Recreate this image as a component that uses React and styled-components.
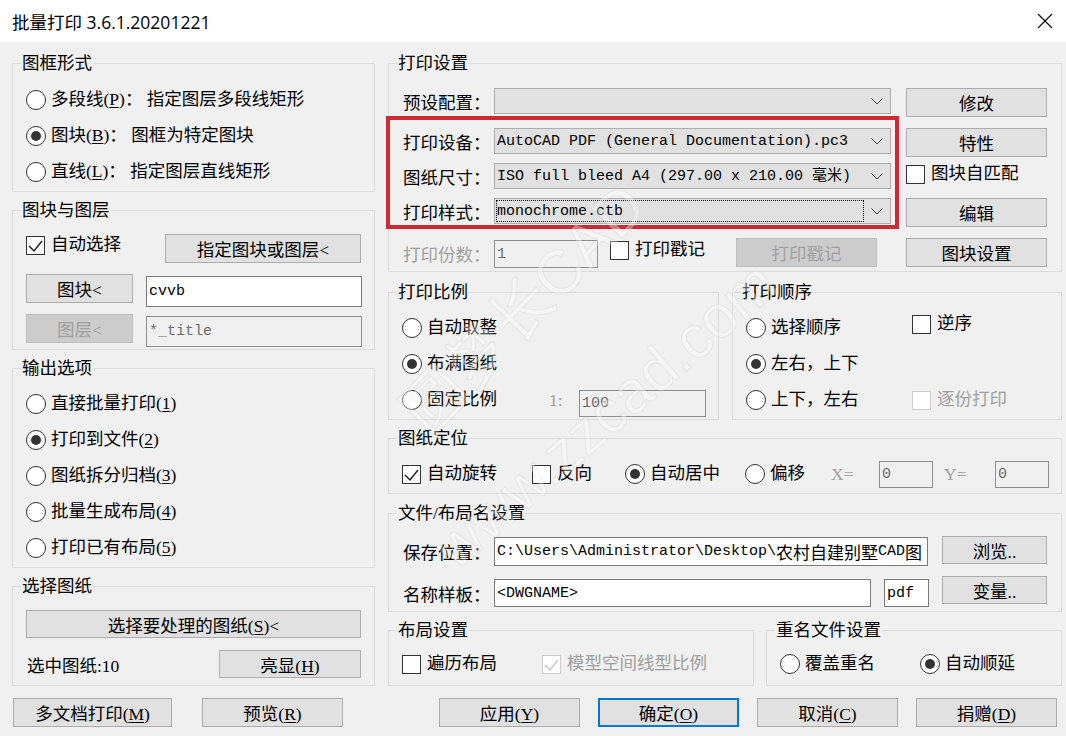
import styled, { createGlobalStyle } from 'styled-components';

const UI_FONT = `"Liberation Serif", "Noto Sans CJK SC", serif`;
const MONO_FONT = `"Liberation Mono", "Noto Sans CJK SC", monospace`;

const GlobalStyle = createGlobalStyle`
  html, body { margin: 0; padding: 0; background: #f0f0f0; }
  body { font-family: ${UI_FONT}; }
  * { box-sizing: border-box; }
`;

const Window = styled.div`
  position: relative;
  width: 1066px;
  height: 736px;
  overflow: hidden;
  background: #f0f0f0;
  color: #000;
  font-family: ${UI_FONT};
  font-size: 17.5px;
`;

const TitleBar = styled.header`
  height: 42px;
  background: #fff;
  display: flex;
  align-items: center;
  justify-content: space-between;
  padding: 0 13px 0 12px;
  font-family: "Open Sans", "Noto Sans CJK SC", sans-serif;
  font-size: 17.5px;
`;

const Body = styled.main`
  display: flex;
  gap: 13px;
  padding: 11px 4px 0 12px;
`;

const Column = styled.div`
  width: ${(p) => p.$w}px;
  flex: none;
  display: flex;
  flex-direction: column;
`;

const Group = styled.fieldset`
  position: relative;
  margin: ${(p) => p.$mt || 0}px 0 0 ${(p) => p.$ml || 0}px;
  width: ${(p) => (p.$w ? p.$w + 'px' : 'auto')};
  height: ${(p) => p.$h}px;
  padding: ${(p) => p.$pad};
  border: 1px solid #dcdcdc;
  min-width: 0;
  flex: none;
`;

const Legend = styled.legend`
  margin-left: -5px;
  padding: 0 1px;
  height: 20px;
  line-height: 20px;
  font-size: 17.5px;
`;

const GroupRow = styled.div`
  display: flex;
  margin-top: ${(p) => p.$mt || 0}px;
`;

const Row = styled.div`
  position: relative;
  display: flex;
  align-items: ${(p) => p.$align || 'flex-start'};
  justify-content: ${(p) => p.$justify || 'flex-start'};
  gap: ${(p) => p.$gap || 0}px;
  height: ${(p) => p.$h}px;
  margin-top: ${(p) => p.$mt || 0}px;
  padding-right: ${(p) => p.$pr || 0}px;
`;

const Rows = styled.div`
  position: relative;
`;

const Grid = styled.div`
  display: grid;
  grid-template-columns: 166px 1fr;
  grid-auto-rows: 36px;
`;

const Choice = styled.label`
  display: flex;
  align-items: center;
  gap: ${(p) => p.$gap}px;
  flex: none;
  width: ${(p) => (p.$w ? p.$w + 'px' : 'auto')};
  height: ${(p) => p.$h || 36}px;
  margin-top: ${(p) => p.$mt || 0}px;
  margin-left: ${(p) => p.$ml || 0}px;
  align-self: ${(p) => p.$self || 'auto'};
  white-space: nowrap;
  line-height: 1;
  color: ${(p) => (p.$disabled ? '#a0a0a0' : '#000')};
`;

const RadioMark = styled.span`
  flex: none;
  width: 20px;
  height: 20px;
  border-radius: 50%;
  border: 1px solid #333;
  background: #fff;
  display: grid;
  place-items: center;

  &::after {
    content: '';
    width: 10px;
    height: 10px;
    border-radius: 50%;
    background: ${(p) => (p.$on ? '#333' : 'transparent')};
  }
`;

const BoxMark = styled.span`
  flex: none;
  width: 19px;
  height: 19px;
  border: 1px solid ${(p) => (p.$disabled ? '#cccccc' : '#333')};
  background: #fff;
  display: grid;
  place-items: center;
`;

const Button = styled.button`
  flex: none;
  width: ${(p) => p.$w}px;
  height: ${(p) => p.$h || 29}px;
  margin-left: ${(p) => p.$ml || 0}px;
  padding: 0;
  font-family: ${UI_FONT};
  font-size: 17.5px;
  color: #000;
  background: #e1e1e1;
  border: ${(p) => (p.$primary ? '2px solid #0078d7' : '1px solid #adadad')};
  white-space: nowrap;

  &:disabled {
    background: #cccccc;
    border-color: #bfbfbf;
    color: #a0a0a0;
  }
`;

const Combo = styled.div`
  flex: none;
  width: 397px;
  height: 26px;
  display: flex;
  align-items: center;
  padding-left: 1px;
  background: #e1e1e1;
  border: 1px solid #adadad;
  font-family: ${MONO_FONT};
  font-size: 15px;
`;

const ComboText = styled.span`
  flex: 1;
  height: 22px;
  line-height: 22px;
  border: 1px dotted ${(p) => (p.$focus ? '#000' : 'transparent')};
  white-space: nowrap;
  overflow: hidden;
`;

const ComboArrow = styled.span`
  flex: none;
  width: 26px;
  display: grid;
  place-items: center;
`;

const Field = styled.div`
  flex: none;
  width: ${(p) => p.$w}px;
  height: ${(p) => p.$h || 28}px;
  margin-top: ${(p) => p.$mt || 0}px;
  margin-left: ${(p) => p.$ml || 0}px;
  padding: 0 2px;
  display: flex;
  align-items: center;
  background: ${(p) => (p.$disabled ? '#f0f0f0' : '#fff')};
  border: 1px solid ${(p) => (p.$disabled ? '#8f8f8f' : '#7a7a7a')};
  color: ${(p) => (p.$disabled ? '#6d6d6d' : '#000')};
  font-family: ${MONO_FONT};
  font-size: 15px;
  white-space: nowrap;
  overflow: hidden;
`;

const Wide = styled.span`
  font-family: "Noto Sans CJK SC", sans-serif;
  font-size: 17px;
`;

const Label = styled.span`
  flex: none;
  width: ${(p) => (p.$w ? p.$w + 'px' : 'auto')};
  height: ${(p) => p.$h || 26}px;
  margin-left: ${(p) => p.$ml || 0}px;
  padding-left: 1px;
  display: flex;
  align-items: center;
  white-space: nowrap;
  color: ${(p) => (p.$disabled ? '#a0a0a0' : '#000')};
`;

const Key = styled.u`
  text-underline-offset: 2px;
`;

const Highlight = styled.div`
  position: absolute;
  left: -16px;
  top: 28px;
  width: 513px;
  height: 113px;
  border: 4px solid #cc2a36;
  pointer-events: none;
`;

const Watermark = styled.div`
  position: absolute;
  left: ${(p) => p.$x}px;
  top: ${(p) => p.$y}px;
  transform: translate(-50%, -50%) rotate(${(p) => p.$deg}deg);
  font-family: "Liberation Sans", "Noto Sans CJK SC", sans-serif;
  font-size: ${(p) => p.$size}px;
  color: rgba(255, 255, 255, 0.35);
  -webkit-text-stroke: 1px rgba(150, 150, 150, 0.12);
  white-space: nowrap;
  pointer-events: none;
`;

const Chevron = () => (
  <svg width="12" height="7" viewBox="0 0 12 7">
    <polyline points="0.5,0.5 6,6 11.5,0.5" fill="none" stroke="#444" strokeWidth="1" />
  </svg>
);

const Radio = ({ on, disabled, w, h, children }) => (
  <Choice $w={w} $h={h} $gap={5} $disabled={disabled}>
    <RadioMark $on={on} />
    <span>{children}</span>
  </Choice>
);

const Check = ({ on, disabled, w, h, mt, ml, self, children }) => (
  <Choice $w={w} $h={h} $mt={mt} $ml={ml} $self={self} $gap={6} $disabled={disabled}>
    <BoxMark $disabled={disabled}>
      {on && (
        <svg width="17" height="17" viewBox="0 0 17 17">
          <polyline
            points="2,9 7,14 15,4"
            fill="none"
            stroke={disabled ? '#c8c8c8' : '#222'}
            strokeWidth="1.5"
          />
        </svg>
      )}
    </BoxMark>
    <span>{children}</span>
  </Choice>
);

const Select = ({ children, focus }) => (
  <Combo>
    <ComboText $focus={focus}>{children}</ComboText>
    <ComboArrow>
      <Chevron />
    </ComboArrow>
  </Combo>
);

const BatchPrintDialog = () => (
  <Window>
    <TitleBar>
      <span>批量打印 3.6.1.20201221</span>
      <svg width="16" height="16" viewBox="0 0 16 16">
        <path d="M1 1 L15 15 M15 1 L1 15" stroke="#000" strokeWidth="1.1" />
      </svg>
    </TitleBar>

    <Body>
      <Column $w={363}>
        <Group $h={139} $pad="9px 12px 1px 13px">
          <Legend>图框形式</Legend>
          <Radio>多段线(<Key>P</Key>)： 指定图层多段线矩形</Radio>
          <Radio on>图块(<Key>B</Key>)： 图框为特定图块</Radio>
          <Radio>直线(<Key>L</Key>)： 指定图层直线矩形</Radio>
        </Group>

        <Group $mt={8} $h={150} $pad="14px 12px 2px 13px">
          <Legend>图块与图层</Legend>
          <Row $h={29}>
            <Check on w={139} h={22}>自动选择</Check>
            <Button $w={196}>指定图块或图层&lt;</Button>
          </Row>
          <Row $h={33} $mt={11}>
            <Button $w={107}>图块&lt;</Button>
            <Field $w={216} $h={31} $mt={2} $ml={13}>cvvb</Field>
          </Row>
          <Row $h={33} $mt={7}>
            <Button $w={107} disabled>图层&lt;</Button>
            <Field $w={216} $h={31} $mt={2} $ml={13} $disabled>*_title</Field>
          </Row>
        </Group>

        <Group $mt={8} $h={210} $pad="8px 12px 1px 13px">
          <Legend>输出选项</Legend>
          <Radio>直接批量打印(<Key>1</Key>)</Radio>
          <Radio on>打印到文件(<Key>2</Key>)</Radio>
          <Radio>图纸拆分归档(<Key>3</Key>)</Radio>
          <Radio>批量生成布局(<Key>4</Key>)</Radio>
          <Radio>打印已有布局(<Key>5</Key>)</Radio>
        </Group>

        <Group $mt={8} $h={110} $pad="14px 12px 0 13px">
          <Legend>选择图纸</Legend>
          <Row $h={28}>
            <Button $w={335} $h={28}>选择要处理的图纸(<Key>S</Key>)&lt;</Button>
          </Row>
          <Row $h={28} $mt={12} $align="center" $justify="space-between" $pr={1}>
            <Label $h={28}>选中图纸:10</Label>
            <Button $w={142} $h={28}>亮显(<Key>H</Key>)</Button>
          </Row>
        </Group>

        <Row $h={29} $mt={12}>
          <Button $w={159} $ml={1}>多文档打印(<Key>M</Key>)</Button>
          <Button $w={141} $ml={30}>预览(<Key>R</Key>)</Button>
        </Row>
      </Column>

      <Column $w={674}>
        <Group $h={219} $pad="15px 13px 3px 13px">
          <Legend>打印设置</Legend>
          <Rows>
            <Row $h={29}>
              <Label $w={92}>预设配置：</Label>
              <Select />
              <Button $w={141} $ml={15}>修改</Button>
            </Row>
            <Row $h={29} $mt={11}>
              <Label $w={92}>打印设备：</Label>
              <Select>AutoCAD PDF (General Documentation).pc3</Select>
              <Button $w={141} $ml={15}>特性</Button>
            </Row>
            <Row $h={29} $mt={6}>
              <Label $w={92}>图纸尺寸：</Label>
              <Select>ISO full bleed A4 (297.00 x 210.00 毫米)</Select>
              <Check w={141} h={22} ml={15}>图块自匹配</Check>
            </Row>
            <Row $h={29} $mt={6}>
              <Label $w={92}>打印样式：</Label>
              <Select focus>monochrome.ctb</Select>
              <Button $w={141} $ml={15}>编辑</Button>
            </Row>
            <Row $h={30} $mt={11}>
              <Label $w={92} $h={30} $disabled>打印份数：</Label>
              <Field $w={104} $mt={2} $disabled>1</Field>
              <Check w={126} h={22} mt={1} ml={12}>打印戳记</Check>
              <Button $w={141} disabled>打印戳记</Button>
              <Button $w={141} $ml={29}>图块设置</Button>
            </Row>
            <Highlight />
          </Rows>
        </Group>

        <GroupRow $mt={10}>
          <Group $w={331} $h={138} $pad="8px 13px 1px 13px">
            <Legend>打印比例</Legend>
            <Radio>自动取整</Radio>
            <Radio on>布满图纸</Radio>
            <Row $h={36} $align="center">
              <Radio w={146}>固定比例</Radio>
              <Label $w={31} $disabled>1:</Label>
              <Field $w={127} $h={27} $mt={6} $disabled>100</Field>
            </Row>
          </Group>
          <Group $w={330} $ml={13} $h={138} $pad="8px 13px 1px 13px">
            <Legend>打印顺序</Legend>
            <Grid>
              <Radio>选择顺序</Radio>
              <Check h={22} mt={3} self="start">逆序</Check>
              <Radio on>左右，上下</Radio>
              <span />
              <Radio>上下，左右</Radio>
              <Check disabled>逐份打印</Check>
            </Grid>
          </Group>
        </GroupRow>

        <Group $mt={8} $h={66} $pad="10px 13px 3px 13px">
          <Legend>图纸定位</Legend>
          <Row $h={32} $align="center">
            <Check on w={130} h={32}>自动旋转</Check>
            <Check w={93} h={32}>反向</Check>
            <Radio on w={120} h={32}>自动居中</Radio>
            <Radio w={85} h={32}>偏移</Radio>
            <Label $w={49} $disabled>X=</Label>
            <Field $w={54} $h={27} $disabled>0</Field>
            <Label $w={52} $ml={10} $disabled>Y=</Label>
            <Field $w={54} $h={27} $disabled>0</Field>
          </Row>
        </Group>

        <Group $mt={9} $h={109} $pad="13px 13px 4px 13px">
          <Legend>文件/布局名设置</Legend>
          <Row $h={30}>
            <Label $w={92} $h={31}>保存位置：</Label>
            <Field $w={434} $h={29} $mt={1}>
              C:\Users\Administrator\Desktop\<Wide>农村自建别墅</Wide>CAD<Wide>图</Wide>
            </Field>
            <Button $w={105} $h={28} $ml={14}>浏览..</Button>
          </Row>
          <Row $h={31} $mt={10}>
            <Label $w={92} $h={34}>名称样板：</Label>
            <Field $w={377} $mt={3}>&lt;DWGNAME&gt;</Field>
            <Field $w={45} $mt={3} $ml={13}>pdf</Field>
            <Button $w={105} $h={28} $ml={13}>变量..</Button>
          </Row>
        </Group>

        <GroupRow $mt={8}>
          <Group $w={366} $h={66} $pad="7px 13px 4px 13px">
            <Legend>布局设置</Legend>
            <Row $h={34} $align="center">
              <Check w={140} h={34}>遍历布局</Check>
              <Check on disabled h={34}>模型空间线型比例</Check>
            </Row>
          </Group>
          <Group $w={296} $ml={12} $h={66} $pad="7px 13px 4px 13px">
            <Legend>重名文件设置</Legend>
            <Row $h={34} $align="center">
              <Radio w={140} h={34}>覆盖重名</Radio>
              <Radio on h={34}>自动顺延</Radio>
            </Row>
          </Group>
        </GroupRow>

        <Row $h={29} $mt={12} $justify="flex-end" $gap={18} $pr={5}>
          <Button $w={141}>应用(<Key>Y</Key>)</Button>
          <Button $w={141} $primary>确定(<Key>O</Key>)</Button>
          <Button $w={141}>取消(<Key>C</Key>)</Button>
          <Button $w={141}>捐赠(<Key>D</Key>)</Button>
        </Row>
      </Column>
    </Body>

    <Watermark $x={520} $y={305} $deg={-46} $size={62}>圆梦长CAD</Watermark>
    <Watermark $x={605} $y={415} $deg={-41} $size={60}>www.zzcad.com</Watermark>
  </Window>
);

export default function App() {
  return (
    <>
      <GlobalStyle />
      <BatchPrintDialog />
    </>
  );
}
